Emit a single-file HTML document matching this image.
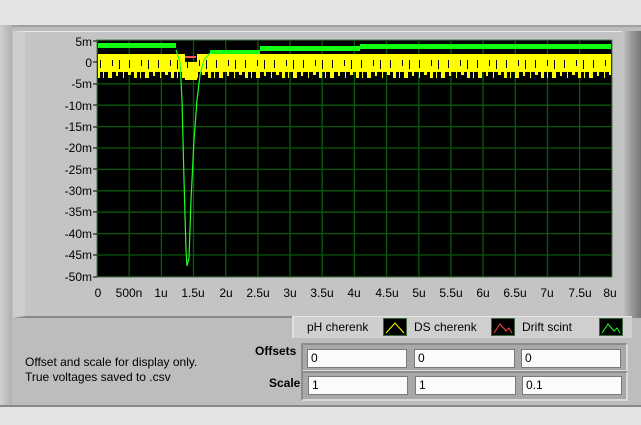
<!DOCTYPE html>
<html><head><style>
body{margin:0;width:641px;height:425px;overflow:hidden;background:#e3e3e3;font-family:"Liberation Sans",sans-serif;position:relative}
.abs{position:absolute}
.box{position:absolute;background:#fbfbfb;border:1px solid #7a7a7a;font-size:12px;line-height:17px;padding-left:3px;box-sizing:border-box}
.fr{position:absolute;background:#a8a8a8;border-top:2px solid #8c8c8c;border-left:2px solid #8c8c8c;border-bottom:2px solid #d8d8d8;border-right:2px solid #d8d8d8;box-sizing:border-box}
.lg{position:absolute;font-size:12px;top:320px}
.ic{position:absolute;top:318px;width:24px;height:18px;background:#000;border:1px solid #3a6a3a;box-sizing:border-box}
</style></head><body>
<div class="abs" style="left:0;top:25px;width:641px;height:382px;background:#bdbdbd;border-top:2px solid #a0a0a0;box-sizing:border-box"></div>
<div class="abs" style="left:0;top:25px;width:12px;height:380px;background:linear-gradient(90deg,#d0d0d0,#b0b0b0)"></div>
<div class="abs" style="left:13px;top:31px;width:621px;height:287px;background:#c4c4c4;border-top:1px solid #e8e8e8;border-left:12px solid #cdcdcd;border-bottom:2px solid #8a8a8a;box-sizing:border-box"></div>
<div class="abs" style="left:622px;top:31px;width:19px;height:287px;background:linear-gradient(90deg,#c8c8c8,#9a9a9a,#777)"></div>
<div class="abs" style="left:0;top:405px;width:641px;height:2px;background:#888"></div>
<svg class="abs" style="left:0;top:0" width="641" height="320">
<defs>
<pattern id="sp" x="97" y="0" width="37" height="10" patternUnits="userSpaceOnUse">
<rect x="0" y="0" width="3" height="8" fill="#ff0"/><rect x="6" y="0" width="1" height="8" fill="#ff0"/><rect x="11" y="0" width="4" height="8" fill="#ff0"/><rect x="19" y="0" width="2" height="6" fill="#ff0"/><rect x="26" y="0" width="1" height="8" fill="#ff0"/><rect x="31" y="0" width="3" height="5" fill="#ff0"/>
</pattern>
<pattern id="bk" x="97" y="0" width="29" height="20" patternUnits="userSpaceOnUse">
<rect x="3" y="0" width="1" height="8" fill="#000"/><rect x="15" y="0" width="1" height="6" fill="#000"/><rect x="22" y="0" width="1" height="9" fill="#000"/>
</pattern>
</defs>
<rect x="97" y="40" width="515" height="237" fill="#000" stroke="#4a7a4a"/>
<g stroke="#0a5a0a" stroke-width="1.3">
<line x1="129.2" y1="40" x2="129.2" y2="277"/><line x1="161.4" y1="40" x2="161.4" y2="277"/><line x1="193.5" y1="40" x2="193.5" y2="277"/><line x1="225.7" y1="40" x2="225.7" y2="277"/><line x1="257.9" y1="40" x2="257.9" y2="277"/><line x1="290.1" y1="40" x2="290.1" y2="277"/><line x1="322.2" y1="40" x2="322.2" y2="277"/><line x1="354.4" y1="40" x2="354.4" y2="277"/><line x1="386.6" y1="40" x2="386.6" y2="277"/><line x1="418.8" y1="40" x2="418.8" y2="277"/><line x1="450.9" y1="40" x2="450.9" y2="277"/><line x1="483.1" y1="40" x2="483.1" y2="277"/><line x1="515.3" y1="40" x2="515.3" y2="277"/><line x1="547.5" y1="40" x2="547.5" y2="277"/><line x1="579.6" y1="40" x2="579.6" y2="277"/>
<line x1="97" y1="62.4" x2="612" y2="62.4"/><line x1="97" y1="83.8" x2="612" y2="83.8"/><line x1="97" y1="105.2" x2="612" y2="105.2"/><line x1="97" y1="126.6" x2="612" y2="126.6"/><line x1="97" y1="148" x2="612" y2="148"/><line x1="97" y1="169.4" x2="612" y2="169.4"/><line x1="97" y1="190.8" x2="612" y2="190.8"/><line x1="97" y1="212.2" x2="612" y2="212.2"/><line x1="97" y1="233.6" x2="612" y2="233.6"/><line x1="97" y1="255" x2="612" y2="255"/>
</g>
<rect x="98" y="43" width="78" height="5" fill="#1f1"/>
<rect x="210" y="50" width="50" height="4" fill="#1f1"/>
<rect x="260" y="46" width="100" height="5" fill="#1f1"/>
<rect x="360" y="44" width="251" height="5" fill="#1f1"/>
<rect x="98" y="54" width="87" height="18" fill="#ff0"/>
<rect x="185" y="62" width="12" height="18" fill="#ff0"/>
<rect x="197" y="54" width="414" height="18" fill="#ff0"/>
<rect x="98" y="54" width="513" height="18" fill="url(#bk)"/>
<rect x="98" y="72" width="513" height="8" fill="url(#sp)"/>
<rect x="185" y="56" width="11" height="2" fill="#f55"/>
<polyline fill="none" stroke="#2f2" stroke-width="1.2" points="176,50 180,62 182,100 184,180 186,250 187,266 189,258 191,200 194,140 197,100 200,75 204,60 210,53"/>
<g fill="#000" font-size="12">
<text x="92" y="46" text-anchor="end">5m</text><text x="92" y="67" text-anchor="end">0</text><text x="92" y="88" text-anchor="end">-5m</text><text x="92" y="110" text-anchor="end">-10m</text><text x="92" y="131" text-anchor="end">-15m</text><text x="92" y="152" text-anchor="end">-20m</text><text x="92" y="174" text-anchor="end">-25m</text><text x="92" y="195" text-anchor="end">-30m</text><text x="92" y="216" text-anchor="end">-35m</text><text x="92" y="238" text-anchor="end">-40m</text><text x="92" y="259" text-anchor="end">-45m</text><text x="92" y="281" text-anchor="end">-50m</text>
</g>
<g stroke="#000"><line x1="93" y1="41" x2="97" y2="41"/><line x1="93" y1="62" x2="97" y2="62"/><line x1="93" y1="84" x2="97" y2="84"/><line x1="93" y1="105" x2="97" y2="105"/><line x1="93" y1="127" x2="97" y2="127"/><line x1="93" y1="148" x2="97" y2="148"/><line x1="93" y1="169" x2="97" y2="169"/><line x1="93" y1="191" x2="97" y2="191"/><line x1="93" y1="212" x2="97" y2="212"/><line x1="93" y1="234" x2="97" y2="234"/><line x1="93" y1="255" x2="97" y2="255"/><line x1="93" y1="277" x2="97" y2="277"/></g>
<g fill="#000" font-size="12" text-anchor="middle">
<text x="98" y="297">0</text><text x="129" y="297">500n</text><text x="161" y="297">1u</text><text x="193" y="297">1.5u</text><text x="226" y="297">2u</text><text x="258" y="297">2.5u</text><text x="290" y="297">3u</text><text x="322" y="297">3.5u</text><text x="354" y="297">4u</text><text x="387" y="297">4.5u</text><text x="419" y="297">5u</text><text x="451" y="297">5.5u</text><text x="483" y="297">6u</text><text x="515" y="297">6.5u</text><text x="547" y="297">7u</text><text x="580" y="297">7.5u</text><text x="610" y="297">8u</text>
</g>
</svg>
<div class="abs" style="left:292px;top:316px;width:338px;height:21px;background:#cfcfcf;border-top:1px solid #e8e8e8;border-left:2px solid #e0e0e0"></div>
<div class="lg" style="left:307px">pH cherenk</div>
<div class="ic" style="left:383px"><svg width="22" height="16"><polyline points="2,14 11,4 20,14" fill="none" stroke="#ff0"/></svg></div>
<div class="lg" style="left:414px">DS cherenk</div>
<div class="ic" style="left:491px"><svg width="22" height="16"><polyline points="2,14 8,5 14,12 17,9 20,14" fill="none" stroke="#f44"/></svg></div>
<div class="lg" style="left:522px">Drift scint</div>
<div class="ic" style="left:599px"><svg width="22" height="16"><polyline points="2,14 8,5 14,12 17,9 20,14" fill="none" stroke="#2f2"/></svg></div>
<div class="abs" style="left:25px;top:355px;font-size:12px;line-height:15px">Offset and scale for display only.<br>True voltages saved to .csv</div>
<div class="abs" style="left:255px;top:344px;font-size:12px;font-weight:bold">Offsets</div>
<div class="abs" style="left:269px;top:376px;font-size:12px;font-weight:bold">Scale</div>
<div class="fr" style="left:301px;top:343px;width:327px;height:29px"></div>
<div class="fr" style="left:301px;top:371px;width:327px;height:30px"></div>
<div class="box" style="left:307px;top:349px;width:100px;height:19px">0</div>
<div class="box" style="left:414px;top:349px;width:101px;height:19px">0</div>
<div class="box" style="left:521px;top:349px;width:100px;height:19px">0</div>
<div class="box" style="left:308px;top:376px;width:100px;height:19px">1</div>
<div class="box" style="left:415px;top:376px;width:101px;height:19px">1</div>
<div class="box" style="left:522px;top:376px;width:100px;height:19px">0.1</div>
</body></html>
